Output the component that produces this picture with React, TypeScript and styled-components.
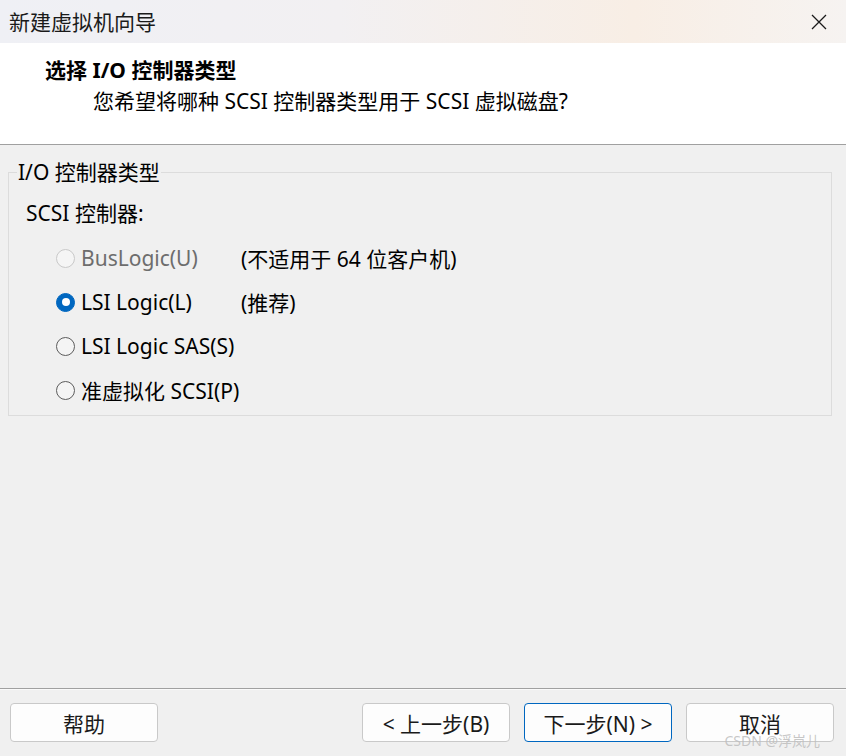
import React, { useState } from "react";
import styled, { createGlobalStyle } from "styled-components";

const GlobalStyle = createGlobalStyle`
  html, body {
    margin: 0;
    padding: 0;
    background: #f0f0f0;
  }
  * {
    box-sizing: border-box;
  }
`;

const fontStack = `"Noto Sans", "Noto Sans CJK SC", sans-serif`;

const Window = styled.div`
  position: relative;
  width: 846px;
  height: 756px;
  display: flex;
  flex-direction: column;
  background: #f0f0f0;
  font-family: ${fontStack};
  color: #000;
  overflow: hidden;
`;

const TitleBar = styled.div`
  height: 43px;
  display: flex;
  align-items: center;
  justify-content: space-between;
  padding: 0 19px 0 9px;
  background: linear-gradient(90deg, #eff0f5 0%, #f2f0f2 40%, #f8eee5 75%, #f6f3f1 100%);
`;

const TitleText = styled.span`
  font-size: 21px;
  line-height: 28px;
  color: #1a1a1a;
`;

const CloseButton = styled.button`
  width: 16px;
  height: 16px;
  padding: 0;
  border: none;
  background: transparent;
  display: flex;
  align-items: center;
  justify-content: center;
`;

const Header = styled.div`
  height: 102px;
  background: #fff;
  border-bottom: 1px solid #a0a0a0;
  padding: 13px 0 0 45px;
`;

const Heading = styled.div`
  font-size: 21px;
  line-height: 28px;
  font-weight: 700;
`;

const SubHeading = styled.div`
  font-size: 21px;
  line-height: 28px;
  margin-top: 3px;
  padding-left: 48px;
`;

const Body = styled.div`
  flex: 1;
  padding: 13px 14px 0 8px;
`;

const GroupBox = styled.fieldset`
  margin: 0;
  padding: 0 0 3px 0;
  border: 1px solid #dcdcdc;
  min-width: 0;
`;

const Legend = styled.legend`
  margin-left: 8px;
  padding: 0 1px;
  font-size: 21px;
  line-height: 28px;
`;

const GroupLabel = styled.div`
  font-size: 21px;
  line-height: 28px;
  margin: 13px 0 9px 17px;
`;

const OptionRow = styled.label<{ $disabled?: boolean }>`
  height: 44px;
  display: flex;
  align-items: center;
  padding-left: 47px;
  font-size: 21px;
  color: ${(p) => (p.$disabled ? "#6d6d6d" : "#000")};
  cursor: ${(p) => (p.$disabled ? "default" : "pointer")};
`;

const OptionMain = styled.span`
  width: 185px;
  display: flex;
  align-items: center;
  gap: 6px;
  white-space: nowrap;
`;

const RadioCircle = styled.span<{ $checked: boolean; $disabled?: boolean }>`
  width: 19px;
  height: 19px;
  border-radius: 50%;
  flex: none;
  display: flex;
  align-items: center;
  justify-content: center;
  background: ${(p) => (p.$checked ? "#0067c0" : p.$disabled ? "#f5f5f5" : "#f4f4f4")};
  border: 1px solid
    ${(p) => (p.$checked ? "#0067c0" : p.$disabled ? "#c9c9c9" : "#5c5c5c")};

  &::after {
    content: "";
    display: ${(p) => (p.$checked ? "block" : "none")};
    width: 8px;
    height: 8px;
    border-radius: 50%;
    background: #fff;
  }
`;

const OptionNote = styled.span`
  color: #000;
  white-space: nowrap;
`;

const Footer = styled.div`
  border-top: 1px solid #a0a0a0;
  box-shadow: inset 0 1px 0 #fafafa;
  padding: 14px 12px 14px 10px;
  display: flex;
  justify-content: space-between;
`;

const ButtonGroup = styled.div`
  display: flex;
  gap: 14px;
`;

const DialogButton = styled.button<{ $primary?: boolean }>`
  width: 148px;
  height: 39px;
  border-radius: 4px;
  background: #fdfdfd;
  border: 1px solid ${(p) => (p.$primary ? "#0067c0" : "#c9c9c9")};
  font-family: ${fontStack};
  font-size: 21px;
  color: #1a1a1a;
  padding: 0;
  display: flex;
  align-items: center;
  justify-content: center;
`;

const Watermark = styled.div`
  position: absolute;
  right: 26px;
  bottom: 6px;
  font-size: 14px;
  color: rgba(190, 190, 190, 0.85);
  pointer-events: none;
`;

const options = [
  { key: "bus", label: "BusLogic(U)", note: "(不适用于 64 位客户机)", disabled: true },
  { key: "lsi", label: "LSI Logic(L)", note: "(推荐)" },
  { key: "sas", label: "LSI Logic SAS(S)" },
  { key: "pv", label: "准虚拟化 SCSI(P)" },
];

const App: React.FC = () => {
  const [selected, setSelected] = useState("lsi");

  return (
    <>
      <GlobalStyle />
      <Window>
        <TitleBar>
          <TitleText>新建虚拟机向导</TitleText>
          <CloseButton aria-label="关闭">
            <svg width="16" height="16" viewBox="0 0 16 16">
              <path d="M1 1 L15 15 M15 1 L1 15" stroke="#1a1a1a" strokeWidth="1.3" />
            </svg>
          </CloseButton>
        </TitleBar>
        <Header>
          <Heading>选择 I/O 控制器类型</Heading>
          <SubHeading>您希望将哪种 SCSI 控制器类型用于 SCSI 虚拟磁盘?</SubHeading>
        </Header>
        <Body>
          <GroupBox>
            <Legend>I/O 控制器类型</Legend>
            <GroupLabel>SCSI 控制器:</GroupLabel>
            {options.map((o) => (
              <OptionRow
                key={o.key}
                $disabled={o.disabled}
                onClick={() => !o.disabled && setSelected(o.key)}
              >
                <OptionMain>
                  <RadioCircle $checked={selected === o.key} $disabled={o.disabled} />
                  {o.label}
                </OptionMain>
                {o.note && <OptionNote>{o.note}</OptionNote>}
              </OptionRow>
            ))}
          </GroupBox>
        </Body>
        <Footer>
          <DialogButton>帮助</DialogButton>
          <ButtonGroup>
            <DialogButton>&lt; 上一步(B)</DialogButton>
            <DialogButton $primary>下一步(N) &gt;</DialogButton>
            <DialogButton>取消</DialogButton>
          </ButtonGroup>
        </Footer>
        <Watermark>CSDN @浮岚儿</Watermark>
      </Window>
    </>
  );
};

export default App;
